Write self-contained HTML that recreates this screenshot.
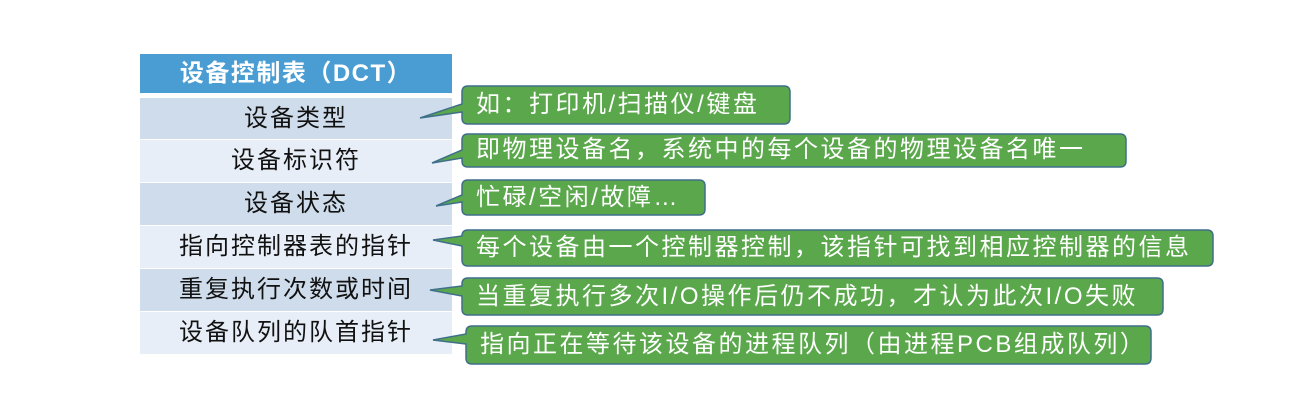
<!DOCTYPE html>
<html><head><meta charset="utf-8"><style>
body{margin:0;width:1312px;height:404px;background:#fff;position:relative;overflow:hidden;font-family:"Liberation Sans","Noto Sans CJK SC",sans-serif}
.r{position:absolute;left:140px;width:312px;text-align:center;font-size:24px;letter-spacing:2px;color:#111}
.t{position:absolute;color:#fff;font-size:24px;letter-spacing:2.5px;white-space:nowrap;line-height:28px}
</style></head><body>
<div class="r" style="top:54px;height:39px;line-height:40px;background:#4a9dd3;color:#fff;font-weight:bold;font-size:24px;letter-spacing:1.5px">设备控制表（DCT）</div>
<div class="r" style="top:98px;height:41px;line-height:41px;background:#cfdcec">设备类型</div>
<div class="r" style="top:140px;height:42px;line-height:42px;background:#e8eef7">设备标识符</div>
<div class="r" style="top:183px;height:42px;line-height:42px;background:#cfdcec">设备状态</div>
<div class="r" style="top:226px;height:42px;line-height:42px;background:#e8eef7">指向控制器表的指针</div>
<div class="r" style="top:269px;height:42px;line-height:42px;background:#cfdcec">重复执行次数或时间</div>
<div class="r" style="top:312px;height:42px;line-height:42px;background:#e8eef7">设备队列的队首指针</div>
<svg width="1312" height="404" style="position:absolute;left:0;top:0">
<g fill="#5aa84b" stroke="#3f6f8a" stroke-width="1.5">
<path d="M468,86 H784 Q790,86 790,92 V118 Q790,124 784,124 H468 Q462,124 462,118 V112 L420,118 L462,104 V92 Q462,86 468,86Z"/>
<path d="M468,134 H1120 Q1126,134 1126,140 V161 Q1126,167 1120,167 H468 Q462,167 462,161 V158 L432,163 L462,150 V140 Q462,134 468,134Z"/>
<path d="M468,180 H699 Q705,180 705,186 V209 Q705,215 699,215 H468 Q462,215 462,209 V202 L436,206 L462,195 V186 Q462,180 468,180Z"/>
<path d="M468,230 H1207 Q1213,230 1213,236 V260 Q1213,266 1207,266 H468 Q462,266 462,260 V246 L433,240 L462,236 Q462,230 468,230Z"/>
<path d="M468,278 H1157 Q1163,278 1163,284 V309 Q1163,315 1157,315 H468 Q462,315 462,309 V296 L430,290 L462,286 V284 Q462,278 468,278Z"/>
<path d="M472,326 H1145 Q1151,326 1151,332 V358 Q1151,364 1145,364 H472 Q466,364 466,358 V344 L433,340 L466,334 V332 Q466,326 472,326Z"/>
</g></svg>
<div class="t" style="left:476px;top:91px">如：打印机/扫描仪/键盘</div>
<div class="t" style="left:476px;top:136px">即物理设备名，系统中的每个设备的物理设备名唯一</div>
<div class="t" style="left:476px;top:184px">忙碌/空闲/故障…</div>
<div class="t" style="left:476px;top:234px">每个设备由一个控制器控制，该指针可找到相应控制器的信息</div>
<div class="t" style="left:476px;top:283px">当重复执行多次I/O操作后仍不成功，才认为此次I/O失败</div>
<div class="t" style="left:480px;top:331px">指向正在等待该设备的进程队列（由进程PCB组成队列）</div>
</body></html>
